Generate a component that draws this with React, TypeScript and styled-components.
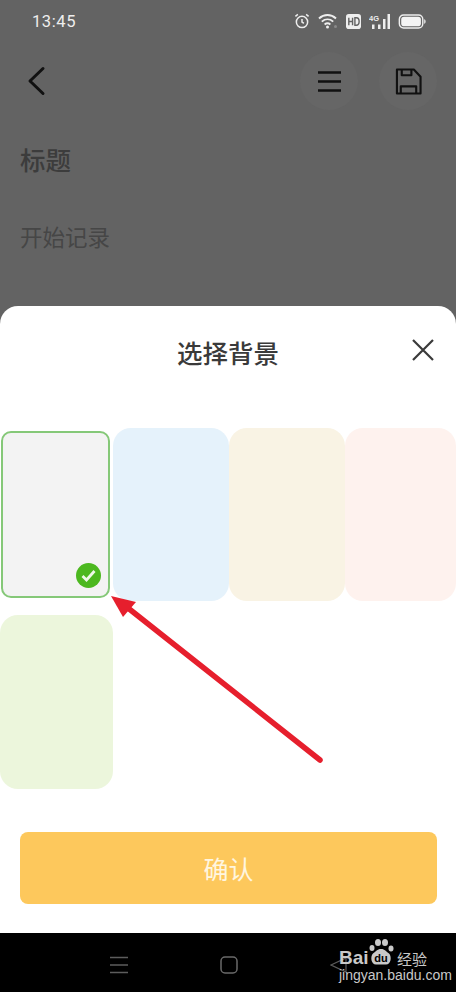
import { FC } from "react";
import styled, { createGlobalStyle } from "styled-components";

const GlobalStyle = createGlobalStyle`
  html, body {
    margin: 0;
    padding: 0;
    background: #000;
  }
  body {
    font-family: "Noto Sans CJK SC", "Noto Sans", sans-serif;
  }
`;

const Screen = styled.div`
  position: relative;
  width: 456px;
  height: 992px;
  overflow: hidden;
  display: flex;
  flex-direction: column;
  background: #636363;
`;

const StatusBar = styled.div`
  height: 42px;
  padding: 0 30px 0 32px;
  display: flex;
  align-items: center;
  justify-content: space-between;
  box-sizing: border-box;
  color: #eee;
`;

const Clock = styled.span`
  font: 16.5px Roboto, sans-serif;
  letter-spacing: 0.6px;
`;

const StatusIcons = styled.div`
  display: flex;
  align-items: center;
  gap: 8px;
`;

const HeaderBar = styled.div`
  height: 78px;
  padding: 0 19px 0 20px;
  display: flex;
  align-items: center;
  gap: 21px;
  box-sizing: border-box;
`;

const BackButton = styled.div`
  margin-right: auto;
  display: flex;
`;

const RoundButton = styled.div`
  width: 58px;
  height: 58px;
  border-radius: 50%;
  background: #666;
  display: flex;
  align-items: center;
  justify-content: center;
`;

const NoteArea = styled.div`
  height: 186px;
  padding: 0 20px;
  box-sizing: border-box;
`;

const NoteTitle = styled.div`
  margin-top: 21px;
  font-size: 25.5px;
  line-height: 36px;
  font-weight: 500;
  color: #3c3c3c;
`;

const NotePlaceholder = styled.div`
  margin-top: 42px;
  font-size: 22.5px;
  line-height: 34px;
  color: #464646;
`;

const Sheet = styled.div`
  flex: 1;
  background: #fff;
  border-radius: 18px 18px 0 0;
  display: flex;
  flex-direction: column;
`;

const SheetHeader = styled.div`
  position: relative;
  height: 96px;
  display: flex;
  align-items: center;
  justify-content: center;
`;

const SheetTitle = styled.div`
  font-size: 25.5px;
  font-weight: 500;
  color: #3a3a3a;
  margin-bottom: 6px;
`;

const CloseButton = styled.div`
  position: absolute;
  right: 21px;
  top: 32px;
  display: flex;
`;

const Swatches = styled.div`
  margin-top: 26px;
  display: grid;
  grid-template-columns: 113px 116px 116px 111px;
  grid-template-rows: 173px 174px;
  row-gap: 14px;
`;

const Swatch = styled.div<{ $color: string; $selected?: boolean }>`
  position: relative;
  background: ${p => p.$color};
  box-sizing: border-box;
  border-radius: ${p => (p.$selected ? "10px" : "18px")};
  ${p => p.$selected && `
    margin: 3px 3px 3px 1px;
    border: 2px solid #85c878;
  `}
`;

const CheckBadge = styled.div`
  position: absolute;
  right: 7px;
  bottom: 8px;
  width: 25px;
  height: 25px;
  border-radius: 50%;
  background: #4cb81f;
  display: flex;
  align-items: center;
  justify-content: center;
`;

const ConfirmButton = styled.div`
  margin: 43px 19px 0 20px;
  height: 72px;
  border-radius: 8px;
  background: #fdc85c;
  color: #fff6e0;
  font-size: 25px;
  display: flex;
  align-items: center;
  justify-content: center;
`;

const NavBar = styled.div`
  height: 59px;
  background: #000;
  display: flex;
  align-items: center;
  box-sizing: border-box;
  padding: 5px 0 0 110px;
  gap: 92px;
`;

const ArrowLayer = styled.svg`
  position: absolute;
  left: 0;
  top: 0;
  pointer-events: none;
`;

const Watermark = styled.div`
  position: absolute;
  left: 339px;
  top: 938px;
  width: 112px;
  height: 50px;
  color: #c9c9c9;
`;

const WatermarkBrand = styled.div`
  position: absolute;
  left: 0;
  top: 8px;
  font: bold 19px/24px "Liberation Sans", sans-serif;
`;

const WatermarkCn = styled.div`
  position: absolute;
  left: 58px;
  top: 12px;
  font-size: 15px;
  line-height: 18px;
`;

const WatermarkUrl = styled.div`
  position: absolute;
  left: 0;
  top: 29px;
  font: 14px/16px "Liberation Sans", sans-serif;
  white-space: nowrap;
`;

const WatermarkPaw = styled.svg`
  position: absolute;
  left: 28px;
  top: 0;
`;

const StatusGlyphs: FC = () => (
  <StatusIcons>
    <svg width="16" height="16" viewBox="0 0 17 17" fill="none" stroke="#eee" strokeWidth="1.6">
      <circle cx="8.5" cy="9.5" r="6" />
      <path d="M8.5 6.5v3.2l2 1.2M1.5 3.5l2.6-2M15.5 3.5l-2.6-2" />
    </svg>
    <svg width="20" height="16" viewBox="0 0 20 16" fill="none" stroke="#eee" strokeWidth="1.9">
      <path d="M1 5.5c5-4.6 12-4.6 17 0M3.8 8.6c3.4-3 8-3 11.4 0M6.6 11.4c1.8-1.4 4-1.4 5.8 0" />
      <circle cx="9.5" cy="14" r="1.5" fill="#eee" stroke="none" />
      <circle cx="17.5" cy="13.5" r="1.5" fill="#8a8a8a" stroke="none" />
    </svg>
    <svg width="15" height="15" viewBox="0 0 16 16">
      <rect width="16" height="16" rx="3" fill="#eee" />
      <path d="M3 4v8M7 4v8M3 8h4M9.5 4v8H11c2 0 3-1.5 3-4s-1-4-3-4z" fill="none" stroke="#636363" strokeWidth="1.5" />
    </svg>
    <svg width="21" height="15" viewBox="0 0 21 15" fill="#eee">
      <rect x="3" y="10.5" width="2.5" height="4.5" />
      <rect x="9" y="10.5" width="2.5" height="4.5" />
      <rect x="14" y="5" width="2.5" height="10" />
      <rect x="18.5" y="0" width="2.5" height="15" />
      <text x="0" y="7" fontSize="7.5" fontWeight="700" fontFamily="Liberation Sans, sans-serif">4G</text>
    </svg>
    <svg width="28" height="15" viewBox="0 0 29 16" fill="none">
      <rect x="1" y="1" width="25" height="14" rx="4.5" stroke="#eee" strokeWidth="1.5" />
      <rect x="3" y="3" width="21" height="10" rx="3" fill="#f4f4f4" />
      <path d="M27.5 5.5c1 .3 1.500 1.200 1.500 2.500s-.5 2.200-1.500 2.500z" fill="#eee" />
    </svg>
  </StatusIcons>
);

const App: FC = () => (
  <>
    <GlobalStyle />
    <Screen>
      <StatusBar>
        <Clock>13:45</Clock>
        <StatusGlyphs />
      </StatusBar>
      <HeaderBar>
        <BackButton>
          <svg width="36" height="36" viewBox="0 0 36 36" fill="none" stroke="#111" strokeWidth="3" strokeLinecap="round" strokeLinejoin="round">
            <path d="M23 5.500L10 18 23 30.500" />
          </svg>
        </BackButton>
        <RoundButton>
          <svg width="23" height="21" viewBox="0 0 23 21" fill="none" stroke="#111" strokeWidth="2.4">
            <path d="M0 1.500h23M0 10.500h23M0 19.500h23" />
          </svg>
        </RoundButton>
        <RoundButton>
          <svg width="27" height="27" viewBox="0 0 28 28" fill="none" stroke="#111" strokeWidth="2.2" strokeLinejoin="round">
            <path d="M2 1.500h17.500L26.500 9v17.500H2z" />
            <path d="M7 1.500v6h10v-6M6 26.500V19h16v7.500" />
          </svg>
        </RoundButton>
      </HeaderBar>
      <NoteArea>
        <NoteTitle>标题</NoteTitle>
        <NotePlaceholder>开始记录</NotePlaceholder>
      </NoteArea>
      <Sheet>
        <SheetHeader>
          <SheetTitle>选择背景</SheetTitle>
          <CloseButton>
            <svg width="24" height="24" viewBox="0 0 24 24" fill="none" stroke="#3a3a3a" strokeWidth="2.2">
              <path d="M2 2l20 20M22 2L2 22" />
            </svg>
          </CloseButton>
        </SheetHeader>
        <Swatches>
          <Swatch $color="#f3f3f3" $selected>
            <CheckBadge>
              <svg width="15" height="13" viewBox="0 0 15 13" fill="none" stroke="#eef8e8" strokeWidth="2.8">
                <path d="M1.500 7l4 4 8-9" />
              </svg>
            </CheckBadge>
          </Swatch>
          <Swatch $color="#e5f2fb" />
          <Swatch $color="#f9f3e4" />
          <Swatch $color="#fef2ee" />
          <Swatch $color="#ecf6dc" />
        </Swatches>
        <ConfirmButton>确认</ConfirmButton>
      </Sheet>
      <NavBar>
        <svg width="18" height="18" viewBox="0 0 18 18" fill="none" stroke="#5c5c5c" strokeWidth="1.4">
          <path d="M0 1.500h18M0 9h18M0 16.500h18" />
        </svg>
        <svg width="18" height="18" viewBox="0 0 18 18" fill="none" stroke="#6a6a6a" strokeWidth="1.5">
          <rect x="1" y="1" width="16" height="16" rx="4" />
        </svg>
        <svg width="17" height="16" viewBox="0 0 17 16" fill="none" stroke="#5c5c5c" strokeWidth="1.2">
          <path d="M1 8l15-7v14z" />
        </svg>
      </NavBar>
      <ArrowLayer width="456" height="992" viewBox="0 0 456 992">
        <path d="M320 760L128 608" stroke="#e61f2d" strokeWidth="5.5" strokeLinecap="round" />
        <path d="M111 596L136 602 123 617z" fill="#e61f2d" />
      </ArrowLayer>
      <Watermark>
        <WatermarkBrand>Bai</WatermarkBrand>
        <WatermarkPaw width="28" height="28" viewBox="0 0 28 28" fill="#c9c9c9">
          <ellipse cx="5" cy="10" rx="2.5" ry="3" />
          <ellipse cx="11" cy="4.5" rx="3" ry="3.5" />
          <ellipse cx="18" cy="4.5" rx="3" ry="3.5" />
          <ellipse cx="24" cy="10.5" rx="2.5" ry="3" />
          <path d="M14 11c4 0 5 2.500 8 4.500 3 3 2 11-3 11H9c-5 0-6-8-3-11 3-2 4-4.500 8-4.500z" />
          <text x="14" y="24" textAnchor="middle" fontSize="11" fontWeight="700" fill="#000" fontFamily="Liberation Sans, sans-serif">du</text>
        </WatermarkPaw>
        <WatermarkCn>经验</WatermarkCn>
        <WatermarkUrl>jingyan.baidu.com</WatermarkUrl>
      </Watermark>
    </Screen>
  </>
);

export default App;
